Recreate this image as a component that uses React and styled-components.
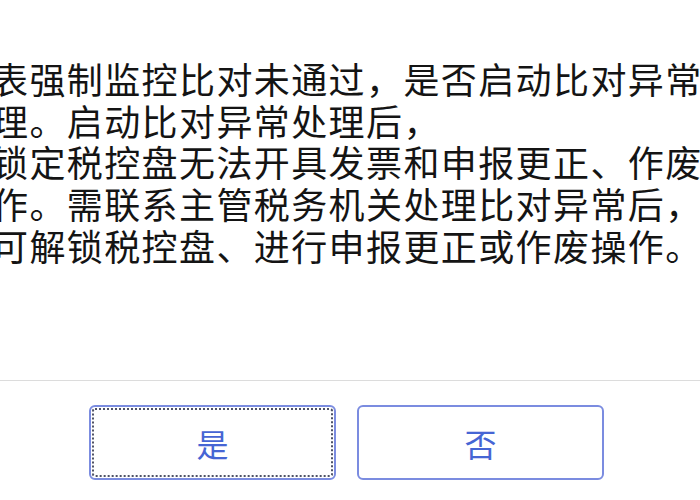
import React from 'react';
import styled, { createGlobalStyle } from 'styled-components';

const GlobalStyle = createGlobalStyle`
  html, body {
    margin: 0;
    padding: 0;
    background: #ffffff;
  }
`;

const LINES = [
  '表强制监控比对未通过，是否启动比对异常处理',
  '理。启动比对异常处理后，',
  '锁定税控盘无法开具发票和申报更正、作废操',
  '作。需联系主管税务机关处理比对异常后，',
  '可解锁税控盘、进行申报更正或作废操作。',
];

const App = () => {
  return (
    <>
      <GlobalStyle />
      <Dialog>
        <Body>
          <Message>
            {LINES.map((line) => (
              <Line key={line}>{line}</Line>
            ))}
          </Message>
        </Body>

        <Footer>
          <DialogButton $focused>是</DialogButton>
          <DialogButton>否</DialogButton>
        </Footer>
      </Dialog>
    </>
  );
};

const Dialog = styled.div`
  width: 700px;
  height: 500px;
  overflow: hidden;

  display: flex;
  flex-direction: column;

  background: #ffffff;
  font-family: 'Noto Sans CJK SC', 'Noto Sans', sans-serif;
`;

const Body = styled.div`
  height: 380px;
  padding-top: 58px;
  box-sizing: border-box;
  overflow: hidden;
`;

const Message = styled.div`
  margin-left: -8px;

  display: flex;
  flex-direction: column;

  font-size: 36px;
  letter-spacing: 1.4px;
  line-height: 41.7px;
  color: #141414;
`;

const Line = styled.p`
  margin: 0;
  white-space: nowrap;
`;

const Footer = styled.div`
  flex: 1;
  padding: 24px 7px 0 0;

  display: flex;
  gap: 21px;
  justify-content: center;
  align-items: flex-start;

  border-top: 1px solid #dcdcdc;
`;

const DialogButton = styled.button`
  width: 247px;
  height: 75px;
  padding: 0;

  display: flex;
  align-items: center;
  justify-content: center;

  background: #ffffff;
  border: 2px solid #7b8ce0;
  border-radius: 6px;

  font-family: 'Noto Sans CJK SC', 'Noto Sans', sans-serif;
  font-size: 32px;
  color: #4665d4;
  cursor: pointer;

  outline: ${({ $focused }) => ($focused ? '2px dotted #4e5266' : 'none')};
  outline-offset: -5px;
`;

export default App;
